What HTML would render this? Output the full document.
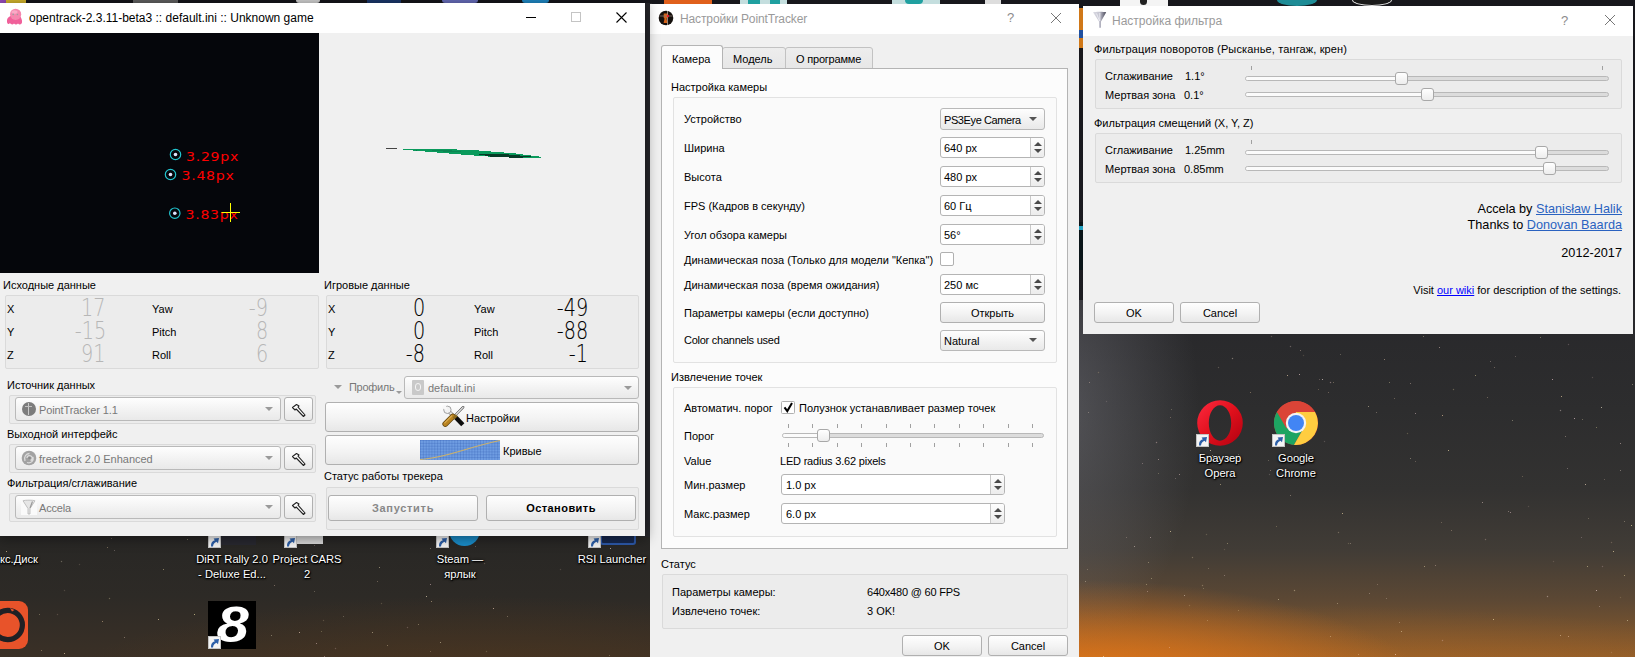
<!DOCTYPE html>
<html lang="ru">
<head>
<meta charset="utf-8">
<title>opentrack</title>
<style>
*{box-sizing:border-box;margin:0;padding:0}
html,body{width:1635px;height:657px;overflow:hidden}
body{position:relative;background:#1b1b1f;font:11px/14px "Liberation Sans",sans-serif;color:#000}
.a{position:absolute}
.t{position:absolute;white-space:nowrap;height:14px;line-height:14px}
.g{color:#787878}
.win{position:absolute;background:#f0f0f0}
.tb{position:absolute;left:0;top:0;right:0;background:#fff}
.tt{position:absolute;white-space:nowrap;font-size:12px;line-height:16px}
.gb{position:absolute;border:1px solid #dadada;border-radius:2px;background:#ececec}
.gbw{position:absolute;border:1px solid #e2e2e2;border-radius:2px;background:#fafafa}
.cb{position:absolute;border:1px solid #b9b9b9;border-radius:3px;background:linear-gradient(#fefefe,#f1f1f1 60%,#e9e9e9)}
.btn{position:absolute;border:1px solid #b0b0b0;border-radius:3px;background:linear-gradient(#fefefe,#f3f3f3 55%,#e7e7e7);text-align:center;white-space:nowrap}
.sp{position:absolute;border:1px solid #b4b4b4;border-radius:3px;background:#fff}
.sp i{position:absolute;right:0;top:0;bottom:0;width:14px;border-left:1px solid #c8c8c8;background:linear-gradient(#fdfdfd,#ececec);border-radius:0 2px 2px 0}
.sp i:before{content:"";position:absolute;left:2.500px;top:4px;border:4px solid transparent;border-top:0;border-bottom:4px solid #4a4a4a}
.sp i:after{content:"";position:absolute;left:2.500px;bottom:4px;border:4px solid transparent;border-bottom:0;border-top:4px solid #4a4a4a}
.ar{position:absolute;width:0;height:0;border:4px solid transparent;border-bottom:0;border-top:4px solid #555}
.trk{position:absolute;height:5px;border:1px solid #b8b8b8;border-radius:3px;background:#dcdcdc}
.trk b{position:absolute;left:0;top:0;bottom:0;background:#fbfbfb;border-radius:2px}
.hd{position:absolute;width:13px;height:13px;border:1px solid #a8a8a8;border-radius:3px;background:linear-gradient(#ffffff,#ededed)}
.tk{position:absolute;width:1px;height:4px;background:#a0a0a0}
.lcd{position:absolute;white-space:nowrap;font-family:"DejaVu Sans Light","DejaVu Sans",sans-serif;font-weight:200;font-size:24px;line-height:20px;height:20px;text-align:right;transform-origin:100% 50%;transform:scaleX(.8);letter-spacing:0px}
.dl{position:absolute;white-space:nowrap;color:#fff;font-size:11.200px;line-height:15px;text-align:center;text-shadow:0 1px 2px #000,0 0 3px #000,1px 1px 1px #000}
.sc{position:absolute;width:13px;height:13px;background:#f2f2f2;border:1px solid #c8c8c8}
a{color:#00f;text-decoration:underline}
</style>
</head>
<body>
<!-- DESKTOP BACKGROUND -->
<div class="a" id="bg" style="left:0;top:0;width:1635px;height:657px;background:linear-gradient(#17171c,#1c1c21 300px,#232326 657px)"></div>
<div class="a" style="left:0;top:536px;width:650px;height:121px;background:radial-gradient(ellipse 420px 90px at 480px 150px,rgba(90,58,26,.55),rgba(60,45,30,0) 100%),linear-gradient(#282725,#2d2a26 60px,#3a3026 121px)"></div>
<div class="a" style="left:1079px;top:300px;width:556px;height:357px;background:
radial-gradient(ellipse 360px 125px at 0px 405px,rgba(250,142,22,1),rgba(228,118,24,.72) 42%,rgba(150,85,30,0) 100%),
radial-gradient(ellipse 620px 95px at 200px 400px,rgba(200,112,30,.5),rgba(150,85,30,0) 100%),
radial-gradient(ellipse 140px 250px at -20px 110px,rgba(140,140,150,.4),rgba(90,90,100,0) 100%),
linear-gradient(#28282b 0,#2d2d2e 110px,#333231 190px,#413c36 250px,#5c4834 300px,#8e5c2a 357px)"></div>

<div class="a" style="left:0;top:0;width:1px;height:1px;background:transparent;box-shadow:1415px 413px 0px 0px rgba(255,217,222,0.45),1632px 384px 0px 0px rgba(255,244,202,0.35),1303px 355px 1px 0px rgba(255,228,174,0.25),1330px 382px 1px 0px rgba(255,216,222,0.60),1210px 450px 0px 0px rgba(255,233,207,0.60),1490px 361px 0px 0px rgba(255,232,224,0.30),1220px 484px 0px 0px rgba(255,232,177,0.45),1399px 622px 0px 0px rgba(255,233,206,0.30),1276px 526px 0px 0px rgba(255,233,173,0.25),1294px 590px 1px 0px rgba(255,239,190,0.60),1560px 635px 0px 0px rgba(255,224,185,0.45),1268px 460px 0px 0px rgba(255,231,201,0.25),1435px 565px 0px 0px rgba(255,218,202,0.35),1512px 420px 0px 0px rgba(255,244,201,0.35),1515px 356px 0px 0px rgba(255,225,214,0.25),1442px 640px 1px 0px rgba(255,217,223,0.45),1179px 474px 0px 0px rgba(255,216,216,0.45),1401px 631px 0px 0px rgba(255,237,194,0.45),1439px 347px 0px 0px rgba(255,220,209,0.45),1203px 588px 0px 0px rgba(255,239,188,0.25),1216px 462px 1px 0px rgba(255,244,225,0.45),1592px 377px 1px 0px rgba(255,227,205,0.30),1368px 406px 0px 0px rgba(255,237,196,0.45),1451px 530px 0px 0px rgba(255,217,181,0.30),1238px 454px 0px 0px rgba(255,230,223,0.30),1270px 470px 0px 0px rgba(255,219,196,0.35),1631px 525px 0px 0px rgba(255,245,178,0.60),1611px 652px 1px 0px rgba(255,243,225,0.25),1485px 539px 1px 0px rgba(255,218,200,0.45),1494px 367px 0px 0px rgba(255,221,198,0.30),1250px 392px 0px 0px rgba(255,218,170,0.35),1238px 610px 0px 0px rgba(255,234,171,0.25),1156px 442px 1px 0px rgba(255,219,210,0.60),1342px 513px 0px 0px rgba(255,230,177,0.60),1202px 585px 1px 0px rgba(255,230,189,0.45),1171px 409px 0px 0px rgba(255,238,186,0.25),1574px 418px 0px 0px rgba(255,221,230,0.60),1624px 521px 0px 0px rgba(255,239,203,0.30),1389px 382px 0px 0px rgba(255,244,180,0.35),1448px 450px 0px 0px rgba(255,235,184,0.60),1283px 458px 0px 0px rgba(255,221,203,0.45),1588px 518px 0px 0px rgba(255,240,187,0.25),1567px 468px 0px 0px rgba(255,229,221,0.30),1441px 522px 0px 0px rgba(255,218,184,0.25),1565px 436px 0px 0px rgba(255,230,209,0.35),1085px 581px 0px 0px rgba(255,241,212,0.35),1206px 534px 1px 0px rgba(255,243,181,0.30),1528px 506px 1px 0px rgba(255,229,195,0.25),1170px 417px 0px 0px rgba(255,215,179,0.30),1560px 410px 1px 0px rgba(255,236,229,0.60),1442px 415px 0px 0px rgba(255,215,170,0.60),1189px 605px 1px 0px rgba(255,242,182,0.30),1300px 350px 0px 0px rgba(255,224,202,0.35),1330px 636px 0px 0px rgba(255,232,196,0.35),1218px 367px 1px 0px rgba(255,236,207,0.35),1613px 551px 0px 0px rgba(255,232,179,0.60),1620px 597px 1px 0px rgba(255,239,181,0.25),1088px 412px 0px 0px rgba(255,230,209,0.30),1207px 620px 0px 0px rgba(255,236,203,0.25),1627px 620px 0px 0px rgba(255,243,205,0.45),1142px 463px 0px 0px rgba(255,216,219,0.30),1184px 595px 0px 0px rgba(255,239,227,0.45),1148px 562px 0px 0px rgba(255,237,187,0.35),1547px 596px 1px 0px rgba(255,231,230,0.60),1337px 603px 0px 0px rgba(255,241,198,0.35),1224px 549px 1px 0px rgba(255,229,190,0.25),1158px 459px 0px 0px rgba(255,221,212,0.45),1394px 398px 0px 0px rgba(255,219,186,0.30),1224px 575px 0px 0px rgba(255,227,226,0.30),1582px 419px 0px 0px rgba(255,237,197,0.30),1611px 542px 1px 0px rgba(255,221,192,0.35),1410px 383px 0px 0px rgba(255,225,205,0.35),1553px 561px 1px 0px rgba(255,225,203,0.25),1386px 598px 0px 0px rgba(255,244,220,0.25),1318px 389px 0px 0px rgba(255,223,172,0.25),1269px 474px 1px 0px rgba(255,242,228,0.30),1348px 543px 1px 0px rgba(255,237,190,0.30),1175px 478px 0px 0px rgba(255,228,227,0.25),1158px 473px 0px 0px rgba(255,240,186,0.25),1169px 647px 0px 0px rgba(255,223,225,0.30),1208px 568px 0px 0px rgba(255,232,196,0.25),1358px 654px 0px 0px rgba(255,231,215,0.30),1328px 392px 0px 0px rgba(255,216,181,0.30),1290px 495px 0px 0px rgba(255,224,198,0.35),1596px 427px 0px 0px rgba(255,240,171,0.35),1340px 354px 0px 0px rgba(255,238,202,0.25),1278px 599px 0px 0px rgba(255,244,198,0.45),1192px 557px 1px 0px rgba(255,231,189,0.45),1304px 453px 0px 0px rgba(255,241,226,0.35),1227px 543px 0px 0px rgba(255,241,178,0.35),1098px 372px 1px 0px rgba(255,220,173,0.35),1170px 531px 0px 0px rgba(255,234,185,0.60),1384px 359px 0px 0px rgba(255,220,187,0.45),1540px 337px 0px 0px rgba(255,245,191,0.35),1415px 461px 0px 0px rgba(255,221,192,0.25),1271px 336px 1px 0px rgba(255,217,200,0.35),1369px 593px 0px 0px rgba(255,231,219,0.30),1089px 382px 0px 0px rgba(255,219,195,0.35),1126px 537px 0px 0px rgba(255,224,210,0.25),1322px 379px 0px 0px rgba(255,236,227,0.60),1482px 502px 0px 0px rgba(255,224,216,0.45),1232px 358px 1px 0px rgba(255,238,214,0.60),1601px 407px 0px 0px rgba(255,241,213,0.60),1319px 379px 0px 0px rgba(255,219,210,0.25),1453px 389px 1px 0px rgba(255,232,173,0.45),1103px 656px 0px 0px rgba(255,230,186,0.60),1087px 569px 0px 0px rgba(255,236,203,0.25),1151px 578px 0px 0px rgba(255,242,186,0.35),1324px 441px 1px 0px rgba(255,230,224,0.30),1475px 375px 0px 0px rgba(255,239,172,0.45),1287px 375px 0px 0px rgba(255,225,186,0.60),1395px 654px 0px 0px rgba(255,215,200,0.60),1146px 584px 0px 0px rgba(255,237,183,0.35),1585px 484px 0px 0px rgba(255,229,199,0.60),1561px 396px 0px 0px rgba(255,224,175,0.60),1568px 344px 1px 0px rgba(255,217,222,0.35),1602px 566px 1px 0px rgba(255,221,228,0.35),1299px 374px 0px 0px rgba(255,219,217,0.60),1620px 470px 0px 0px rgba(255,234,222,0.35),1604px 479px 0px 0px rgba(255,222,201,0.25),1581px 537px 0px 0px rgba(255,215,230,0.25),1587px 566px 0px 0px rgba(255,238,179,0.45),1510px 512px 0px 0px rgba(255,218,223,0.45),1423px 336px 0px 0px rgba(255,241,195,0.35),1206px 436px 0px 0px rgba(255,223,193,0.25),1150px 537px 0px 0px rgba(255,226,229,0.45),1522px 476px 0px 0px rgba(255,218,173,0.25),1376px 412px 0px 0px rgba(255,228,202,0.30),1407px 433px 1px 0px rgba(255,243,171,0.35),1493px 619px 0px 0px rgba(255,238,175,0.60),1134px 546px 0px 0px rgba(255,235,225,0.45),1377px 584px 0px 0px rgba(255,220,200,0.25),1508px 511px 0px 0px rgba(255,223,217,0.35),1350px 543px 0px 0px rgba(255,230,205,0.30),1487px 397px 0px 0px rgba(255,217,183,0.30),1596px 590px 0px 0px rgba(255,229,228,0.60),1424px 566px 0px 0px rgba(255,232,182,0.45),1333px 382px 0px 0px rgba(255,232,175,0.30),1410px 458px 0px 0px rgba(255,240,206,0.35),1290px 346px 1px 0px rgba(255,228,217,0.45),1620px 443px 0px 0px rgba(255,225,218,0.45),1147px 591px 0px 0px rgba(255,219,213,0.35),1599px 606px 0px 0px rgba(255,223,227,0.30),1338px 532px 1px 0px rgba(255,228,189,0.45),1106px 401px 1px 0px rgba(255,237,218,0.25),1568px 636px 0px 0px rgba(255,217,195,0.45),1624px 575px 0px 0px rgba(255,240,176,0.45),1313px 415px 0px 0px rgba(255,245,222,0.30),1552px 379px 0px 0px rgba(255,215,220,0.60),1212px 455px 0px 0px rgba(255,235,215,0.60),311px 554px 1px 0px rgba(255,237,218,0.35),114px 550px 0px 0px rgba(255,231,230,0.25),596px 562px 0px 0px rgba(255,222,220,0.45),615px 538px 0px 0px rgba(255,229,187,0.25),323px 620px 1px 0px rgba(255,231,185,0.30),560px 569px 1px 0px rgba(255,237,211,0.25),314px 545px 0px 0px rgba(255,230,226,0.25),430px 548px 0px 0px rgba(255,236,197,0.35),379px 567px 0px 0px rgba(255,237,191,0.45),430px 584px 0px 0px rgba(255,215,221,0.45),299px 632px 0px 0px rgba(255,221,201,0.60),205px 577px 0px 0px rgba(255,229,184,0.30),271px 635px 0px 0px rgba(255,245,209,0.35),507px 616px 0px 0px rgba(255,230,196,0.30),57px 614px 1px 0px rgba(255,216,183,0.30),24px 614px 1px 0px rgba(255,216,215,0.30),61px 561px 1px 0px rgba(255,243,215,0.45),321px 631px 0px 0px rgba(255,244,180,0.25),337px 562px 1px 0px rgba(255,216,189,0.30),387px 645px 0px 0px rgba(255,229,180,0.35),111px 538px 0px 0px rgba(255,217,192,0.25),430px 651px 0px 0px rgba(255,227,192,0.25),316px 643px 0px 0px rgba(255,216,215,0.45),484px 563px 1px 0px rgba(255,221,190,0.35),372px 632px 0px 0px rgba(255,235,196,0.45),253px 641px 0px 0px rgba(255,227,172,0.45),475px 546px 0px 0px rgba(255,221,217,0.25),64px 653px 0px 0px rgba(255,226,187,0.60),343px 616px 0px 0px rgba(255,238,215,0.25),324px 656px 0px 0px rgba(255,215,216,0.35),609px 655px 0px 0px rgba(255,241,184,0.25),109px 598px 1px 0px rgba(255,240,186,0.45),440px 642px 0px 0px rgba(255,244,201,0.45),187px 539px 0px 0px rgba(255,234,185,0.35),335px 648px 1px 0px rgba(255,226,220,0.35),610px 548px 0px 0px rgba(255,227,218,0.60),163px 569px 0px 0px rgba(255,235,172,0.45),493px 608px 0px 0px rgba(255,220,197,0.60),107px 547px 0px 0px rgba(255,221,176,0.35),431px 601px 0px 0px rgba(255,222,178,0.45),426px 596px 0px 0px rgba(255,238,204,0.60),124px 637px 0px 0px rgba(255,223,206,0.35),274px 585px 0px 0px rgba(255,221,198,0.35),253px 561px 0px 0px rgba(255,219,188,0.30),592px 562px 0px 0px rgba(255,227,186,0.35),251px 602px 0px 0px rgba(255,235,221,0.60),102px 621px 0px 0px rgba(255,218,170,0.45),486px 651px 1px 0px rgba(255,244,193,0.30),41px 650px 0px 0px rgba(255,218,173,0.35),194px 614px 0px 0px rgba(255,244,174,0.60),381px 603px 1px 0px rgba(255,234,186,0.30),6px 551px 0px 0px rgba(255,221,172,0.60),377px 581px 0px 0px rgba(255,221,186,0.30),39px 614px 0px 0px rgba(255,241,190,0.30),418px 624px 0px 0px rgba(255,234,189,0.35),79px 564px 1px 0px rgba(255,232,200,0.25),64px 590px 1px 0px rgba(255,236,205,0.25),158px 619px 0px 0px rgba(255,235,180,0.60),407px 627px 1px 0px rgba(255,224,212,0.35),314px 591px 0px 0px rgba(255,238,206,0.25)"></div>
<div class="a" style="left:640px;top:3px;width:12px;height:534px;background:#27272b"></div>
<!--WIN1S-->
<div class="win" style="left:0;top:3px;width:645px;height:533px;box-shadow:0 1px 12px 1px rgba(0,0,0,.45);z-index:3"></div>
<div class="a" id="w1" style="left:0;top:0;z-index:4">
<div class="a" style="left:0;top:3px;width:645px;height:30px;background:#fff"></div>
<svg class="a" style="left:6px;top:8px" width="18" height="18" viewBox="0 0 18 18"><path d="M4.500 8C2 9 .5 11 1 14c.5 2.500 2 2.500 3 1 1 1.800 3 1.800 4 .5 1 1.300 3 1.300 4 0 1 1.300 3.500 1.300 4-1 .5-2.500-1-5-2-6.500z" fill="#f0609a"/><circle cx="9.600" cy="6.300" r="5.600" fill="#f587ae"/><ellipse cx="8.500" cy="4" rx="3" ry="1.800" fill="#f9aac6"/><circle cx="7.200" cy="6.400" r=".8" fill="#9aa0a0"/><circle cx="11.400" cy="6.500" r=".8" fill="#9aa0a0"/></svg>
<div class="tt" style="left:29px;top:10px">opentrack-2.3.11-beta3 :: default.ini :: Unknown game</div>
<div class="a" style="left:526px;top:17px;width:10px;height:1px;background:#000"></div>
<div class="a" style="left:571px;top:12px;width:10px;height:10px;border:1px solid #c4c4c4"></div>
<svg class="a" style="left:616px;top:12px" width="11" height="11"><path d="M.5.5l10 10M10.500.5l-10 10" stroke="#000" stroke-width="1.100" fill="none"/></svg>
<!-- camera view -->
<div class="a" style="left:0;top:33px;width:319px;height:240px;background:#05060b"></div>
<svg class="a" style="left:0;top:33px" width="319" height="240">
<g fill="none" stroke="#22c4cf" stroke-width="1.200"><circle cx="175.500" cy="121.500" r="5.200"/><circle cx="170.500" cy="141.500" r="5.200"/><circle cx="174.800" cy="180.200" r="5.200"/></g>
<g fill="#dfe6ff"><circle cx="175.500" cy="121.500" r="1.800"/><circle cx="170.500" cy="141.500" r="1.800"/><circle cx="174.800" cy="180.200" r="1.800"/></g>
<g fill="#f00" font-family="DejaVu Sans, sans-serif" font-size="12" letter-spacing=".6"><text x="186" y="127.500" textLength="53" lengthAdjust="spacingAndGlyphs">3.29px</text><text x="181.500" y="147.300" textLength="53" lengthAdjust="spacingAndGlyphs">3.48px</text><text x="185.500" y="186.200" textLength="53" lengthAdjust="spacingAndGlyphs">3.83px</text></g>
<path d="M221.500 179.500h18.500M230.500 170v19" stroke="#ff0" stroke-width="1" fill="none"/>
</svg>
<!-- pose widget -->
<div class="a" style="left:386px;top:148px;width:11px;height:1px;background:#444"></div>
<svg class="a" style="left:400px;top:145px" width="145" height="16" shape-rendering="crispEdges"><polygon points="2.900,4 44.400,4 74.600,5.200 114,8.300 140.800,11.800 140.800,13 92,11.800 63,9.700 25.800,6.600 2.900,4.600" fill="#0a9a5c"/><polygon points="74.600,8.800 100,8.500 114,10 138.500,12.200 113,12.700 90.900,11.600" fill="#063a26"/><polygon points="10,4.500 22,4.600 17,5.600" fill="#067a4c"/><polygon points="30,5.300 52,5.500 70,7.500 48,7" fill="#0b8552"/></svg>
<!-- raw data -->
<div class="t" style="left:3px;top:278px">Исходные данные</div>
<div class="gb" style="left:5px;top:295px;width:314px;height:74px"></div>
<div class="t" style="left:7px;top:302px">X</div><div class="t" style="left:7px;top:325px">Y</div><div class="t" style="left:7px;top:348px">Z</div>
<div class="t" style="left:152px;top:302px">Yaw</div><div class="t" style="left:152px;top:325px">Pitch</div><div class="t" style="left:152px;top:348px">Roll</div>
<div class="lcd" style="right:-106px;top:298px;color:#b6b6b6">17</div>
<div class="lcd" style="right:-106px;top:321px;color:#b6b6b6">-15</div>
<div class="lcd" style="right:-106px;top:344px;color:#b6b6b6">91</div>
<div class="lcd" style="right:-268px;top:298px;color:#b6b6b6">-9</div>
<div class="lcd" style="right:-268px;top:321px;color:#b6b6b6">8</div>
<div class="lcd" style="right:-268px;top:344px;color:#b6b6b6">6</div>
<!-- game data -->
<div class="t" style="left:324px;top:278px">Игровые данные</div>
<div class="gb" style="left:326px;top:295px;width:313px;height:74px"></div>
<div class="t" style="left:328px;top:302px">X</div><div class="t" style="left:328px;top:325px">Y</div><div class="t" style="left:328px;top:348px">Z</div>
<div class="t" style="left:474px;top:302px">Yaw</div><div class="t" style="left:474px;top:325px">Pitch</div><div class="t" style="left:474px;top:348px">Roll</div>
<div class="lcd" style="right:-425px;top:298px;color:#000;-webkit-text-stroke:.12px #000">0</div>
<div class="lcd" style="right:-425px;top:321px;color:#000;-webkit-text-stroke:.12px #000">0</div>
<div class="lcd" style="right:-425px;top:344px;color:#000;-webkit-text-stroke:.12px #000">-8</div>
<div class="lcd" style="right:-588px;top:298px;color:#000;-webkit-text-stroke:.12px #000">-49</div>
<div class="lcd" style="right:-588px;top:321px;color:#000;-webkit-text-stroke:.12px #000">-88</div>
<div class="lcd" style="right:-588px;top:344px;color:#000;-webkit-text-stroke:.12px #000">-1</div>
<!-- source -->
<div class="t" style="left:7px;top:378px">Источник данных</div>
<div class="gb" style="left:9px;top:395px;width:307px;height:29px"></div>
<div class="cb" style="left:15px;top:397px;width:266px;height:24px"></div>
<div class="a" style="left:22px;top:402px;width:14px;height:14px;border-radius:7px;background:#7c7c7c"></div>
<div class="a" style="left:28px;top:403px;width:1px;height:12px;background:#c8c8c8"></div><div class="a" style="left:25px;top:406px;width:7px;height:1px;background:#c0c0c0"></div>
<div class="t g" style="left:39px;top:403px;letter-spacing:-.1px">PointTracker 1.1</div>
<div class="ar" style="left:265px;top:407px;border-top-color:#9a9a9a"></div>
<div class="btn" style="left:284px;top:397px;width:29px;height:24px"></div>
<div class="t" style="left:7px;top:427px">Выходной интерфейс</div>
<div class="gb" style="left:9px;top:444px;width:307px;height:29px"></div>
<div class="cb" style="left:15px;top:446px;width:266px;height:24px"></div>
<svg class="a" style="left:21px;top:450px" width="16" height="16" viewBox="0 0 16 16"><circle cx="8" cy="8" r="7.300" fill="#a2a2a2"/><path d="M4 11C2.500 7 5 3.500 8.500 3.500M6 12.500c4 1.500 7-2 6-5.500M6 8c0-2 2-3 4-2s1.500 4-.5 4.500" stroke="#dcdcdc" stroke-width="1.300" fill="none"/><circle cx="8.500" cy="8" r="1.300" fill="#8a8a8a"/></svg>
<div class="t g" style="left:39px;top:452px">freetrack 2.0 Enhanced</div>
<div class="ar" style="left:265px;top:456px;border-top-color:#9a9a9a"></div>
<div class="btn" style="left:284px;top:446px;width:29px;height:24px"></div>
<div class="t" style="left:7px;top:476px">Фильтрация/сглаживание</div>
<div class="gb" style="left:9px;top:493px;width:307px;height:29px"></div>
<div class="cb" style="left:15px;top:495px;width:266px;height:24px"></div>
<div class="a" style="left:21px;top:499px;width:16px;height:16px;background:#fafafa"></div>
<svg class="a" style="left:21px;top:499px" width="16" height="16"><path d="M2 1.800c2-.8 10-.8 12 0L9 9.500v5.500H7V9.500z" fill="#e6e6e6" stroke="#b4b4b4" stroke-width=".8"/><path d="M11.500 2.500L9 9" stroke="#9a9a9a" stroke-width="1.200"/></svg>
<div class="t g" style="left:39px;top:501px;letter-spacing:-.2px">Accela</div>
<div class="ar" style="left:265px;top:505px;border-top-color:#9a9a9a"></div>
<div class="btn" style="left:284px;top:495px;width:29px;height:24px"></div>
<svg class="a" style="left:289px;top:402px" width="18" height="16"><path d="M3.500 5.500l4-3 2.500 1.500-1 1.200 7 7.800-1.500 1.500-7.300-7.500-1.200 1z" fill="#fff" stroke="#222" stroke-width="1.100" stroke-linejoin="round"/></svg>
<svg class="a" style="left:289px;top:451px" width="18" height="16"><path d="M3.500 5.500l4-3 2.500 1.500-1 1.200 7 7.800-1.500 1.500-7.300-7.500-1.200 1z" fill="#fff" stroke="#222" stroke-width="1.100" stroke-linejoin="round"/></svg>
<svg class="a" style="left:289px;top:500px" width="18" height="16"><path d="M3.500 5.500l4-3 2.500 1.500-1 1.200 7 7.800-1.500 1.500-7.300-7.500-1.200 1z" fill="#fff" stroke="#222" stroke-width="1.100" stroke-linejoin="round"/></svg>
<!-- profile row -->
<div class="ar" style="left:334px;top:385px;border-top-color:#9a9a9a"></div>
<div class="t g" style="left:349px;top:380px;letter-spacing:-.3px">Профиль</div>
<div class="ar" style="left:396px;top:391px;border-width:3px 3px 0;border-top-color:#9a9a9a"></div>
<div class="cb" style="left:404px;top:376px;width:235px;height:23px"></div>
<div class="a" style="left:412px;top:380px;width:12px;height:15px;background:#c9c9c9;border-radius:1px"></div>
<div class="a" style="left:415px;top:383px;width:6px;height:8px;border:1px solid #f4f4f4;border-radius:3px"></div>
<div class="t g" style="left:428px;top:381px">default.ini</div>
<div class="ar" style="left:624px;top:386px;border-top-color:#9a9a9a"></div>
<!-- settings button -->
<div class="btn" style="left:325px;top:402px;width:314px;height:30px"></div>
<svg class="a" style="left:442px;top:405px" width="24" height="24" viewBox="0 0 24 24"><path d="M11.200 10.700L6.500 6" stroke="#8a8a8a" stroke-width="3.600" stroke-linecap="round"/><path d="M11.200 10.700L6.500 6" stroke="#ececec" stroke-width="2.200" stroke-linecap="round"/><circle cx="5.400" cy="4.800" r="3.700" fill="#f2f2f2" stroke="#8c8c8c" stroke-width=".8"/><path d="M5.400 5L-.5 3 3.300 -1.500z" fill="#f8f8f8"/><path d="M13.500 10L21.200 2.200" stroke="#4a4a4a" stroke-width="2.400" stroke-linecap="round"/><path d="M13.500 10L21.200 2.200" stroke="#f0f0f0" stroke-width="1.100" stroke-linecap="round"/><path d="M3.300 19L10.800 11.500" stroke="#5e420e" stroke-width="5.800" stroke-linecap="round"/><path d="M3.300 19L10.800 11.500" stroke="#b9831f" stroke-width="4.400" stroke-linecap="round"/><path d="M2.800 17.800L9.600 11" stroke="#d8aa50" stroke-width="1.200" stroke-linecap="round"/><path d="M13.600 12.200L20.800 19.800" stroke="#0c0c0c" stroke-width="4.400" stroke-linecap="butt"/><path d="M12.200 10.800l2 2" stroke="#8a6a20" stroke-width="4.400"/></svg>
<div class="t" style="left:466px;top:411px">Настройки</div>
<!-- curves button -->
<div class="btn" style="left:325px;top:435px;width:314px;height:30px"></div>
<div class="a" style="left:420px;top:440px;width:80px;height:20px;background-color:#6f9de2;background-image:linear-gradient(90deg,rgba(50,95,180,.3) 1px,transparent 1px),linear-gradient(rgba(50,95,180,.3) 1px,transparent 1px);background-size:2.860px 2.860px"></div>
<svg class="a" style="left:420px;top:440px" width="80" height="20"><path d="M0 19.500C25 18 45 8 80 .5" stroke="#c8b070" stroke-width="1.100" fill="none"/></svg>
<div class="t" style="left:503px;top:444px">Кривые</div>
<!-- tracker status -->
<div class="t" style="left:324px;top:469px">Статус работы трекера</div>
<div class="gb" style="left:326px;top:487px;width:313px;height:43px"></div>
<div class="btn" style="left:328px;top:495px;width:150px;height:26px;font-weight:bold;line-height:24px;color:#888;letter-spacing:.7px">Запустить</div>
<div class="btn" style="left:486px;top:495px;width:150px;height:26px;font-weight:bold;line-height:24px;letter-spacing:.45px">Остановить</div>
</div>
<!--WIN1E-->
<!--WIN2S-->
<div class="win" style="left:650px;top:4px;width:429px;height:653px;z-index:1"></div>
<div class="a" id="w2" style="left:0;top:0;z-index:2">
<div class="a" style="left:650px;top:4px;width:429px;height:30px;background:#fff"></div>
<svg class="a" style="left:658px;top:10px" width="16" height="16" viewBox="0 0 16 16"><circle cx="8" cy="8" r="7.300" fill="#15100d"/><path d="M5.800 3.500h3.800l-.4 4-.6 1.200.8 4.300H5.600l.9-4.300-.9-1.500z" fill="#d2621a"/><path d="M9.500 1v14" stroke="#c8b8a8" stroke-width=".7"/><path d="M1.500 6h13" stroke="#8a7a70" stroke-width=".8"/><rect x="9" y="4.800" width="1.800" height="2.400" fill="#f01828"/></svg>
<div class="tt" style="left:680px;top:11px;color:#9a9a9a;letter-spacing:-.12px">Настройки PointTracker</div>
<div class="tt" style="left:1007px;top:10px;color:#8c8c8c;font-size:13px">?</div>
<svg class="a" style="left:1050px;top:12px" width="12" height="12"><path d="M1 1l10 10M11 1L1 11" stroke="#777" stroke-width="1" fill="none"/></svg>
<!-- tabs -->
<div class="a" style="left:722px;top:47px;width:64px;height:22px;border:1px solid #c2c2c2;border-radius:3px 3px 0 0;background:linear-gradient(#ededed,#e7e7e7)"></div>
<div class="a" style="left:785px;top:47px;width:88px;height:22px;border:1px solid #c2c2c2;border-radius:3px 3px 0 0;background:linear-gradient(#ededed,#e7e7e7)"></div>
<div class="a" style="left:661px;top:68px;width:407px;height:481px;border:1px solid #b4b4b4;background:#fcfcfc"></div>
<div class="a" style="left:661px;top:45px;width:62px;height:24px;border:1px solid #b4b4b4;border-bottom:0;border-radius:3px 3px 0 0;background:#fcfcfc"></div>
<div class="t" style="left:672px;top:52px">Камера</div>
<div class="t" style="left:733px;top:52px">Модель</div>
<div class="t" style="left:796px;top:52px;letter-spacing:-.2px">О программе</div>
<!-- camera group -->
<div class="t" style="left:671px;top:80px">Настройка камеры</div>
<div class="gbw" style="left:673px;top:97px;width:384px;height:266px"></div>
<div class="t" style="left:684px;top:112px">Устройство</div>
<div class="t" style="left:684px;top:141px">Ширина</div>
<div class="t" style="left:684px;top:170px">Высота</div>
<div class="t" style="left:684px;top:199px">FPS (Кадров в секунду)</div>
<div class="t" style="left:684px;top:228px">Угол обзора камеры</div>
<div class="t" style="left:684px;top:253px">Динамическая поза (Только для модели "Кепка")</div>
<div class="t" style="left:684px;top:278px">Динамическая поза (время ожидания)</div>
<div class="t" style="left:684px;top:306px">Параметры камеры (если доступно)</div>
<div class="t" style="left:684px;top:333px;letter-spacing:-.25px">Color channels used</div>
<div class="cb" style="left:940px;top:108px;width:105px;height:22px"></div>
<div class="t" style="left:944px;top:113px;letter-spacing:-.4px">PS3Eye Camera</div>
<div class="ar" style="left:1029px;top:117px"></div>
<div class="sp" style="left:940px;top:137px;width:105px;height:21px"><i></i></div><div class="t" style="left:944px;top:141px">640 px</div>
<div class="sp" style="left:940px;top:166px;width:105px;height:21px"><i></i></div><div class="t" style="left:944px;top:170px">480 px</div>
<div class="sp" style="left:940px;top:195px;width:105px;height:21px"><i></i></div><div class="t" style="left:944px;top:199px">60 Гц</div>
<div class="sp" style="left:940px;top:224px;width:105px;height:21px"><i></i></div><div class="t" style="left:944px;top:228px">56°</div>
<div class="a" style="left:940px;top:252px;width:14px;height:14px;border:1px solid #b0b0b0;border-radius:2px;background:#fff"></div>
<div class="sp" style="left:940px;top:274px;width:105px;height:21px"><i></i></div><div class="t" style="left:944px;top:278px">250 мс</div>
<div class="btn" style="left:940px;top:302px;width:105px;height:21px;line-height:20px">Открыть</div>
<div class="cb" style="left:940px;top:330px;width:105px;height:21px"></div>
<div class="t" style="left:944px;top:334px">Natural</div>
<div class="ar" style="left:1029px;top:338px"></div>
<!-- point extraction -->
<div class="t" style="left:671px;top:370px">Извлечение точек</div>
<div class="gbw" style="left:673px;top:387px;width:384px;height:150px"></div>
<div class="t" style="left:684px;top:401px">Автоматич. порог</div>
<div class="a" style="left:781px;top:400.500px;width:14px;height:13.500px;border:1px solid #b0b0b0;border-radius:1.500px;background:#fff"></div>
<svg class="a" style="left:783px;top:402px" width="11" height="11"><path d="M1.500 5.300l2.800 3.800L9 1" stroke="#000" stroke-width="2" fill="none"/></svg>
<div class="t" style="left:799px;top:401px">Полузнок устанавливает размер точек</div>
<div class="t" style="left:684px;top:429px">Порог</div>
<div class="trk" style="left:782px;top:433px;width:262px"><b style="width:40px"></b></div>
<div class="hd" style="left:817px;top:429px"></div>
<div class="tk" style="left:788px;top:424px"></div><div class="tk" style="left:788px;top:443px"></div><div class="tk" style="left:812px;top:424px"></div><div class="tk" style="left:812px;top:443px"></div><div class="tk" style="left:837px;top:424px"></div><div class="tk" style="left:837px;top:443px"></div><div class="tk" style="left:861px;top:424px"></div><div class="tk" style="left:861px;top:443px"></div><div class="tk" style="left:886px;top:424px"></div><div class="tk" style="left:886px;top:443px"></div><div class="tk" style="left:910px;top:424px"></div><div class="tk" style="left:910px;top:443px"></div><div class="tk" style="left:934px;top:424px"></div><div class="tk" style="left:934px;top:443px"></div><div class="tk" style="left:959px;top:424px"></div><div class="tk" style="left:959px;top:443px"></div><div class="tk" style="left:983px;top:424px"></div><div class="tk" style="left:983px;top:443px"></div><div class="tk" style="left:1008px;top:424px"></div><div class="tk" style="left:1008px;top:443px"></div><div class="tk" style="left:1032px;top:424px"></div><div class="tk" style="left:1032px;top:443px"></div>
<div class="t" style="left:684px;top:454px">Value</div>
<div class="t" style="left:780px;top:454px;letter-spacing:-.2px">LED radius 3.62 pixels</div>
<div class="t" style="left:684px;top:478px">Мин.размер</div>
<div class="sp" style="left:781px;top:474px;width:224px;height:21px"><i></i></div><div class="t" style="left:786px;top:478px">1.0 px</div>
<div class="t" style="left:684px;top:507px">Макс.размер</div>
<div class="sp" style="left:781px;top:503px;width:224px;height:21px"><i></i></div><div class="t" style="left:786px;top:507px">6.0 px</div>
<!-- status -->
<div class="t" style="left:661px;top:557px">Статус</div>
<div class="gb" style="left:662px;top:574px;width:406px;height:55px"></div>
<div class="t" style="left:672px;top:585px">Параметры камеры:</div><div class="t" style="left:867px;top:585px;letter-spacing:-.2px">640x480 @ 60 FPS</div>
<div class="t" style="left:672px;top:604px">Извлечено точек:</div><div class="t" style="left:867px;top:604px">3 OK!</div>
<div class="btn" style="left:902px;top:635px;width:80px;height:21px;line-height:20px">OK</div>
<div class="btn" style="left:988px;top:635px;width:80px;height:21px;line-height:20px">Cancel</div>
</div>
<!--WIN2E-->
<!--WIN3S-->
<div class="win" style="left:1083px;top:6px;width:550px;height:328px;z-index:1"></div>
<div class="a" id="w3" style="left:0;top:0;z-index:2">
<div class="a" style="left:1083px;top:6px;width:550px;height:30px;background:#fff"></div>
<svg class="a" style="left:1092px;top:11px" width="16" height="18"><defs><linearGradient id="fg" x1="0" y1="0" x2="1" y2="0"><stop offset="0" stop-color="#dcdce4"/><stop offset=".5" stop-color="#c4c4d0"/><stop offset=".8" stop-color="#777786"/><stop offset="1" stop-color="#4a4a58"/></linearGradient></defs><path d="M1 1.300c2-.8 11-.8 13.200 0L9 10.500v6.200H7v-6.200z" fill="url(#fg)"/><path d="M4.500 2.500L7.500 10M7.800 2v8" stroke="#f0f0f6" stroke-width=".8" fill="none"/></svg>
<div class="tt" style="left:1112px;top:13px;color:#9a9a9a">Настройка фильтра</div>
<div class="tt" style="left:1561px;top:13px;color:#8c8c8c;font-size:13px">?</div>
<svg class="a" style="left:1604px;top:14px" width="12" height="12"><path d="M1 1l10 10M11 1L1 11" stroke="#777" stroke-width="1" fill="none"/></svg>
<div class="t" style="left:1094px;top:42px;letter-spacing:.13px">Фильтрация поворотов (Рысканье, тангаж, крен)</div>
<div class="gb" style="left:1095px;top:59px;width:527px;height:50px"></div>
<div class="t" style="left:1105px;top:69px">Сглаживание</div><div class="t" style="left:1185px;top:69px">1.1°</div>
<div class="t" style="left:1105px;top:88px">Мертвая зона</div><div class="t" style="left:1184px;top:88px">0.1°</div>
<div class="tk" style="left:1251px;top:66px"></div><div class="tk" style="left:1602px;top:66px"></div>
<div class="trk" style="left:1245px;top:76px;width:364px"><b style="width:155px"></b></div><div class="hd" style="left:1395px;top:72px"></div>
<div class="trk" style="left:1245px;top:92px;width:364px"><b style="width:182px"></b></div><div class="hd" style="left:1421px;top:88px"></div>
<div class="t" style="left:1094px;top:116px">Фильтрация смещений (X, Y, Z)</div>
<div class="gb" style="left:1095px;top:133px;width:527px;height:50px"></div>
<div class="t" style="left:1105px;top:143px">Сглаживание</div><div class="t" style="left:1185px;top:143px">1.25mm</div>
<div class="t" style="left:1105px;top:162px">Мертвая зона</div><div class="t" style="left:1184px;top:162px">0.85mm</div>
<div class="tk" style="left:1251px;top:140px"></div>
<div class="trk" style="left:1245px;top:150px;width:364px"><b style="width:295px"></b></div><div class="hd" style="left:1535px;top:146px"></div>
<div class="trk" style="left:1245px;top:166px;width:364px"><b style="width:303px"></b></div><div class="hd" style="left:1543px;top:162px"></div>
<div class="t" style="right:-1622px;top:201px;font-size:12.700px;line-height:16px;height:16px">Accela by <a style="color:#2a62c0">Stanisław Halik</a></div>
<div class="t" style="right:-1622px;top:217px;font-size:12.700px;line-height:16px;height:16px">Thanks to <a style="color:#2a62c0">Donovan Baarda</a></div>
<div class="t" style="right:-1622px;top:245px;font-size:12.700px;line-height:16px;height:16px">2012-2017</div>
<div class="t" style="right:-1621px;top:283px">Visit <a>our wiki</a> for description of the settings.</div>
<div class="btn" style="left:1094px;top:302px;width:80px;height:21px;line-height:20px">OK</div>
<div class="btn" style="left:1180px;top:302px;width:80px;height:21px;line-height:20px">Cancel</div>
</div>
<!--WIN3E-->
<!--DESKS-->
<svg width="0" height="0" style="position:absolute"><defs><symbol id="sc" viewBox="0 0 13 13"><rect x=".5" y=".5" width="12" height="12" fill="#f4f4f4" stroke="#c4c4c4"/><path d="M3 11.500C2.800 8 4.300 6 6.800 5.300L5.600 3.400l5.400-.4-1 5.200-1.500-1.500C6.600 7.500 5.200 9 5 11.500z" fill="#2c5fa8"/></symbol></defs></svg>
<div class="a" id="desk" style="left:0;top:0;z-index:0">
<!-- top strip peeks -->
<div class="a" style="left:0;top:0;width:6px;height:3px;background:#9a50c0"></div>
<div class="a" style="left:6px;top:0;width:20px;height:3px;background:#e0c030"></div>
<div class="a" style="left:133px;top:0;width:45px;height:3px;background:#666"></div>
<div class="a" style="left:296px;top:0;width:24px;height:3px;background:#ddd;border-radius:0 0 12px 12px"></div>
<div class="a" style="left:367px;top:0;width:34px;height:3px;background:#1c3a70"></div>
<div class="a" style="left:442px;top:0;width:36px;height:3px;background:#6d72c4;border-radius:0 0 8px 8px"></div>
<div class="a" style="left:522px;top:0;width:27px;height:3px;background:#2090d0;border-radius:0 0 8px 8px"></div>
<div class="a" style="left:664px;top:0;width:48px;height:4px;background:#e0601c"></div>
<div class="a" style="left:740px;top:0;width:47px;height:4px;background:#c4dede"></div>
<div class="a" style="left:748px;top:0;width:12px;height:4px;background:#20a0a0"></div><div class="a" style="left:770px;top:0;width:10px;height:4px;background:#20a0a0"></div>
<div class="a" style="left:892px;top:0;width:48px;height:4px;background:#c4dede"></div>
<div class="a" style="left:905px;top:0;width:18px;height:4px;background:#20a0a0;border-radius:0 0 9px 9px"></div>
<div class="a" style="left:985px;top:0;width:16px;height:4px;background:#ddd"></div>
<div class="a" style="left:1120px;top:0;width:48px;height:6px;background:#f4f4f4"></div>
<div class="a" style="left:1140px;top:0;width:7px;height:5px;background:#222;border-radius:0 0 4px 4px"></div>
<div class="a" style="left:1277px;top:0;width:40px;height:6px;background:#1e8c96;border-radius:0 0 20px 20px/0 0 6px 6px"></div>
<div class="a" style="left:1352px;top:0;width:40px;height:6px;background:#1a1a1a;border:1px solid #ddd;border-top:0;border-radius:0 0 20px 20px/0 0 6px 6px"></div>
<!-- strip between win2 and win3 -->
<div class="a" style="left:1079px;top:8px;width:4px;height:40px;background:#d07818"></div>
<div class="a" style="left:1079px;top:30px;width:4px;height:8px;background:#2050a0"></div>
<div class="a" style="left:1079px;top:222px;width:4px;height:48px;background:#0a1418"></div>
<div class="a" style="left:1079px;top:226px;width:4px;height:4px;background:#20a0c0"></div>
<!-- opera -->
<svg class="a" style="left:1196px;top:399px" width="48" height="48" viewBox="0 0 48 48"><defs><linearGradient id="og" x1="0" y1="0" x2="1" y2="1"><stop offset="0" stop-color="#ff2a40"/><stop offset=".5" stop-color="#e0101c"/><stop offset="1" stop-color="#b00010"/></linearGradient></defs><path fill-rule="evenodd" fill="url(#og)" d="M24 1.200a22.800 22.800 0 1 0 0 45.600a22.800 22.800 0 1 0 0-45.600zM24 6.300c6.200 0 11.200 7.900 11.200 17.700s-5 17.700-11.200 17.700-11.200-7.900-11.200-17.700 5-17.700 11.200-17.700z"/></svg>
<svg class="a" style="left:1196px;top:434px" width="13" height="13"><use href="#sc"/></svg>
<div class="dl" style="left:1180px;top:451px;width:80px">Браузер<br>Opera</div>
<!-- chrome -->
<svg class="a" style="left:1272px;top:399px" width="48" height="48" viewBox="0 0 48 48"><circle cx="24" cy="24" r="22" fill="#db4437"/><path d="M24 24L4.900 13A22 22 0 0 0 22 45.900L31.500 29.500z" fill="#1da462"/><path d="M24 24l7.500 5.500L22 45.900A22 22 0 0 0 43 13H24z" fill="#ffcd40"/><path d="M24 13h19A22 22 0 0 0 4.900 13L14.500 29.500z" fill="#db4437"/><circle cx="24" cy="24" r="10.200" fill="#f4f4f4"/><circle cx="24" cy="24" r="8" fill="#4285f4"/></svg>
<svg class="a" style="left:1272px;top:434px" width="13" height="13"><use href="#sc"/></svg>
<div class="dl" style="left:1256px;top:451px;width:80px">Google<br>Chrome</div>
<!-- bottom-left icons -->
<div class="dl" style="left:-42px;top:552px;width:80px;text-align:right">Яндекс.Диск</div>
<div class="a" style="left:221px;top:533px;width:35px;height:12px;background:#282830"></div><svg class="a" style="left:208px;top:535px" width="13" height="13"><use href="#sc"/></svg>
<div class="dl" style="left:182px;top:552px;width:100px">DiRT Rally 2.0<br>- Deluxe Ed...</div>
<div class="a" style="left:297px;top:533px;width:26px;height:11px;background:#d8d8d8"></div><svg class="a" style="left:284px;top:535px" width="13" height="13"><use href="#sc"/></svg>
<div class="dl" style="left:257px;top:552px;width:100px">Project CARS<br>2</div>
<div class="a" style="left:449px;top:515px;width:31px;height:31px;border-radius:16px;background:#1a8cc8"></div><svg class="a" style="left:436px;top:535px" width="13" height="13"><use href="#sc"/></svg>
<div class="dl" style="left:410px;top:552px;width:100px">Steam —<br>ярлык</div>
<div class="a" style="left:600px;top:520px;width:36px;height:25px;background:#16284e;border:2px solid #2c58a8;border-radius:3px"></div><svg class="a" style="left:588px;top:535px" width="13" height="13"><use href="#sc"/></svg>
<div class="dl" style="left:562px;top:552px;width:100px">RSI Launcher</div>
<!-- origin-like orange icon -->
<div class="a" style="left:-20px;top:601px;width:48px;height:48px;border-radius:9px;background:#e8532a"></div>
<svg class="a" style="left:0;top:601px" width="28" height="48"><circle cx="7.700" cy="24" r="14.700" fill="none" stroke="#1f2024" stroke-width="5.200"/><path d="M10 7l4.500 2-2.500 1.500z" fill="#e8532a"/></svg>
<!-- 8 icon -->
<div class="a" style="left:208px;top:601px;width:48px;height:48px;background:#000"></div>
<div class="a" style="left:208px;top:601px;width:48px;height:48px;color:#fff;font:italic bold 50px/48px 'Liberation Sans',sans-serif;text-align:center;white-space:nowrap;text-indent:-3px;transform-origin:9px 50%;transform:scaleX(1.160)">8</div>
<svg class="a" style="left:208px;top:636px" width="13" height="13"><use href="#sc"/></svg>
</div>
<!--DESKE-->
</body>
</html>
